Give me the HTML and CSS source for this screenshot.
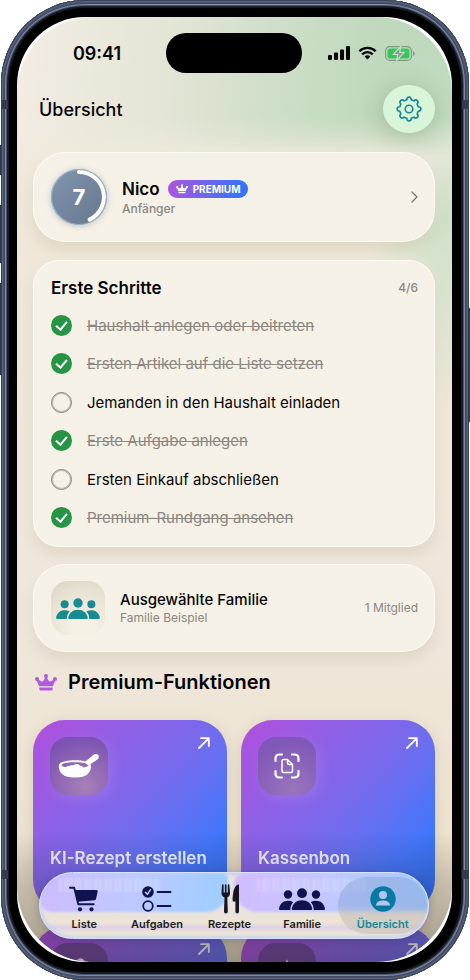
FILE: index.html
```html
<!DOCTYPE html>
<html lang="de">
<head>
<meta charset="utf-8">
<meta name="viewport" content="width=device-width, initial-scale=1">
<title>Übersicht</title>
<link rel="stylesheet" href="styles.css">
</head>
<body>
<svg class="defs" aria-hidden="true">
  <symbol id="crown" viewBox="0 0 22 17">
    <circle cx="11" cy="2" r="2"/><circle cx="2" cy="5" r="2"/><circle cx="20" cy="5" r="2"/>
    <path d="M1.500 6L3 5Q6 8 7.500 7.500Q9.500 6.500 10 2.500H12Q12.500 6.500 14.500 7.500Q16 8 19 5L20.500 6L17.900 12.300H4.100Z"/>
    <path d="M4.300 13.600H17.700V15Q17.700 16.500 16.200 16.500H5.800Q4.300 16.500 4.300 15Z"/>
  </symbol>
  <symbol id="people" viewBox="0 0 46 22">
    <circle cx="9" cy="6.500" r="4.200"/><circle cx="37" cy="6.500" r="4.200"/><circle cx="23" cy="5.200" r="4.900"/>
    <path d="M1 22Q0 22 0 20.500C1 15.500 4.500 12.800 9 12.800Q12 12.800 14.300 14.200C12.200 16.200 11.200 18.800 11.300 22Z"/>
    <path d="M45 22Q46 22 46 20.500C45 15.500 41.500 12.800 37 12.800Q34 12.800 31.700 14.200C33.800 16.200 34.800 18.800 34.700 22Z"/>
    <path d="M14 22Q12.500 22 12.800 20.400C13.800 15.500 17.500 12.200 23 12.200S32.200 15.500 33.200 20.400Q33.500 22 32 22Z"/>
  </symbol>
  <symbol id="arrow" viewBox="0 0 12 12">
    <path d="M1 11L10.700 1.300M3 1.200H10.800V9" fill="none" stroke="currentColor" stroke-width="1.800" stroke-linecap="round" stroke-linejoin="round"/>
  </symbol>
</svg>

<div class="device">
  <i class="band band-tl"></i><i class="band band-tr"></i><i class="band band-bl"></i><i class="band band-br"></i>
  <i class="key key-action"></i><i class="key key-up"></i><i class="key key-down"></i><i class="key key-power"></i>
  <div class="bezel">
    <div class="screen">
      <div class="statusbar">
        <span class="time">09:41</span>
        <span class="island"></span>
        <span class="indicators">
          <svg width="22" height="14" viewBox="0 0 22 14"><rect x="0" y="9" width="4" height="5" rx="1"/><rect x="6" y="6.500" width="4" height="7.500" rx="1"/><rect x="12" y="3.500" width="4" height="10.500" rx="1"/><rect x="18" y="0" width="4" height="14" rx="1"/></svg>
          <svg width="19" height="14" viewBox="0 0 19 14"><path d="M1.300 5.300A11.700 11.700 0 0 1 17.700 5.300M4.200 8.400A7.500 7.500 0 0 1 14.800 8.400" fill="none" stroke="#000" stroke-width="2.300"/><path d="M6.600 10.600A4.200 4.200 0 0 1 12.400 10.600L9.500 13.600Z"/></svg>
          <svg width="30" height="15" viewBox="0 0 30 15"><rect x=".6" y=".6" width="25.800" height="13.800" rx="4.200" fill="none" stroke="#809480" stroke-width="1.100"/><rect x="2.500" y="2.500" width="22" height="10" rx="2.600" fill="#34c759"/><path d="M28 5V10Q29.700 9.200 29.700 7.500T28 5Z" fill="#809480"/><path d="M15.800 .5L8.300 8.500H12.800L11.600 14.500L19.200 6.400H14.700Z" fill="#869a89" stroke="#c6dec6" stroke-width="1.200"/></svg>
        </span>
      </div>

      <header class="topbar">
        <h1>Übersicht</h1>
        <button class="gear" type="button" aria-label="Einstellungen">
          <svg class="line" width="26" height="26" viewBox="-13 -13 26 26" stroke="#188796" stroke-width="1.600" stroke-linejoin="round"><path d="M-2.200 -9.200Q-2.200 -11.900 0 -11.900T2.200 -9.200Q3.600 -8.800 4.900 -8.100Q6.700 -10 8.400 -8.400Q10 -6.700 8.100 -4.900Q8.800 -3.600 9.200 -2.200Q11.900 -2.200 11.900 0T9.200 2.200Q8.800 3.600 8.100 4.900Q10 6.700 8.400 8.400Q6.700 10 4.900 8.100Q3.600 8.800 2.200 9.200Q2.200 11.900 0 11.900T-2.200 9.200Q-3.600 8.800 -4.900 8.100Q-6.700 10 -8.400 8.400Q-10 6.700 -8.100 4.900Q-8.800 3.600 -9.200 2.200Q-11.900 2.200 -11.900 0T-9.200 -2.200Q-8.800 -3.600 -8.100 -4.900Q-10 -6.700 -8.400 -8.400Q-6.700 -10 -4.900 -8.100Q-3.600 -8.800 -2.200 -9.200Z"/><circle r="3.800"/></svg>
        </button>
      </header>

      <main>
        <a class="card profile" href="#profil">
          <span class="level">
            <svg class="line" viewBox="0 0 56 56"><path d="M28 3A25 25 0 0 1 38.600 50.600" stroke="#fff" stroke-width="4" stroke-linecap="round"/></svg>
            <b>7</b>
          </span>
          <span class="who">
            <span class="name">Nico <span class="badge"><svg width="12" height="10"><use href="#crown"/></svg>PREMIUM</span></span>
            <span class="sub medium">Anfänger</span>
          </span>
          <svg class="chevron line" width="7" height="12" viewBox="0 0 7 12"><path d="M1 1L6 6L1 11" stroke="currentColor" stroke-width="1.200" stroke-linecap="round" stroke-linejoin="round"/></svg>
        </a>

        <section class="card steps">
          <div class="steps-head"><h2>Erste Schritte</h2><span class="count">4/6</span></div>
          <ul>
            <li><label><input type="checkbox" checked><span>Haushalt anlegen oder beitreten</span></label></li>
            <li><label><input type="checkbox" checked><span>Ersten Artikel auf die Liste setzen</span></label></li>
            <li><label><input type="checkbox"><span>Jemanden in den Haushalt einladen</span></label></li>
            <li><label><input type="checkbox" checked><span>Erste Aufgabe anlegen</span></label></li>
            <li><label><input type="checkbox"><span>Ersten Einkauf abschließen</span></label></li>
            <li><label><input type="checkbox" checked><span>Premium-Rundgang ansehen</span></label></li>
          </ul>
        </section>

        <a class="card family" href="#familie">
          <span class="family-icon"><svg width="44" height="21"><use href="#people"/></svg></span>
          <span class="who"><span class="family-name">Ausgewählte Familie</span><span class="sub">Familie Beispiel</span></span>
          <span class="sub">1 Mitglied</span>
        </a>

        <h2 class="premium-title"><svg width="22" height="17"><use href="#crown"/></svg>Premium-Funktionen</h2>

        <div class="tiles">
          <a class="tile" href="#ki-rezept">
            <span class="tile-top">
              <span class="tile-icon glow"><svg width="42" height="26" viewBox="0 0 42 26"><path d="M26.500 9.300L35.500 1.700Q38.500 0 40.300 2Q41.800 4.400 39.400 6.500L30.500 12.500Z"/><path fill-rule="evenodd" d="M17 7.300C26.500 7.300 33 9 33 13C33 19.500 29 24.600 17 24.600S.8 19.500 .8 13C.8 9 7.500 7.300 17 7.300ZM17 9.200C9 9.200 3.500 10.300 3.500 12.300Q3.800 13.600 7.500 14.300C9 12.900 10.500 13.400 11.500 12.800C13.300 11.400 14 12.700 15.500 12.200C18 10.500 20.500 10.800 22 12.700C23.500 12.900 24.700 13.100 25.200 14.500Q30.500 13.700 30.500 12.300C30.500 10.300 25 9.200 17 9.200Z"/></svg></span>
              <svg class="arrow" width="12" height="12"><use href="#arrow"/></svg>
            </span>
            <span class="tile-title">KI-Rezept erstellen</span>
          </a>
          <a class="tile" href="#kassenbon">
            <span class="tile-top">
              <span class="tile-icon"><svg class="line" width="26" height="26" viewBox="0 0 26 26" stroke="#fff" stroke-linecap="round" stroke-linejoin="round"><path stroke-width="2.200" d="M1.500 8V5.500Q1.500 1.500 5.500 1.500H8M18 1.500H20.500Q24.500 1.500 24.500 5.500V8M24.500 18V20.500Q24.500 24.500 20.500 24.500H18M8 24.500H5.500Q1.500 24.500 1.500 20.500V18"/><path stroke-width="1.500" d="M9.500 6.500H13.500L18.500 11.500V18Q18.500 19.500 17 19.500H9.500Q8 19.500 8 18V8Q8 6.500 9.500 6.500ZM13.500 6.800V10Q13.500 11.500 15 11.500H18.300"/></svg></span>
              <svg class="arrow" width="12" height="12"><use href="#arrow"/></svg>
            </span>
            <span class="tile-title">Kassenbon</span>
          </a>
          <a class="tile" href="#mehr" aria-label="Weitere Funktion">
            <span class="tile-top">
              <span class="tile-icon dim"><svg width="28" height="28" viewBox="0 0 28 28"><path d="M7 10Q4 1 12 2Q16 -2 20 3Q26 3 24 10V24H7Z"/></svg></span>
              <svg class="arrow" width="12" height="12"><use href="#arrow"/></svg>
            </span>
          </a>
          <a class="tile" href="#mehr-2" aria-label="Weitere Funktion">
            <span class="tile-top">
              <span class="tile-icon dim"><svg width="26" height="26" viewBox="0 0 26 26"><path d="M13 0L16 10L26 13L16 16L13 26L10 16L0 13L10 10Z"/></svg></span>
              <svg class="arrow" width="12" height="12"><use href="#arrow"/></svg>
            </span>
          </a>
        </div>
      </main>

      <div class="shade"></div>

      <nav class="tabbar">
        <i class="refraction refraction-left"></i><i class="refraction refraction-right"></i>
        <i class="ghost ghost-left"></i><i class="ghost ghost-right"></i>
        <a href="#liste"><svg width="30" height="26" viewBox="0 0 30 26"><path d="M1 1.700H5.200L9.300 18.200H24.700" fill="none" stroke="currentColor" stroke-width="1.900" stroke-linecap="round" stroke-linejoin="round"/><path d="M5.500 4H27.500Q29 4 28.700 5.500L27 13Q26.700 14.200 25.400 14.300L8.200 15.800Z"/><circle cx="11" cy="23.300" r="2.100"/><circle cx="22.500" cy="23.300" r="2.100"/></svg>Liste</a>
        <a href="#aufgaben"><svg width="30" height="26" viewBox="0 0 30 26"><circle cx="6" cy="6" r="5.800"/><path d="M3.500 6.300L5.400 8.300L8.500 3.700" fill="none" stroke="#c4cffb" stroke-width="1.400" stroke-linecap="round"/><circle cx="6" cy="20" r="4.800" fill="none" stroke="currentColor" stroke-width="1.800"/><path d="M15.500 6H28.500M15.500 20H28.500" stroke="currentColor" stroke-width="1.900" stroke-linecap="round"/></svg>Aufgaben</a>
        <a class="rezepte" href="#rezepte"><svg width="26" height="30" viewBox="0 0 26 30"><path d="M5 1Q5 .3 5.800 .3T6.600 1V8.500H7.900V1Q8 .3 8.700 .3T9.500 1V8.500H10.800V1Q11 .3 11.700 .3T12.400 1L13 9Q13 12.300 10.300 13.500L10.800 27.500Q10.700 29.600 8.900 29.600T7 27.500L7.500 13.500Q4.500 12.300 4.500 9Z"/><path d="M22 .5V27.500Q22 29.600 20.200 29.600T18.400 27.500V17.500H16.500Q15.500 17.500 15.600 16C15.700 8 17.500 .5 22 .5Z"/></svg>Rezepte</a>
        <a href="#familie-tab"><svg width="46" height="22"><use href="#people"/></svg>Familie</a>
        <a class="active" href="#uebersicht" aria-current="page"><svg width="26" height="26" viewBox="0 0 26 26"><circle cx="13" cy="13" r="12.700" fill="#087aa2"/><circle cx="13" cy="9" r="4" fill="#b3c5f1"/><path d="M5.800 19.500Q6.500 14.500 13 14.500T20.200 19.500H5.800Z" fill="#b3c5f1"/></svg>Übersicht</a>
      </nav>
    </div>
  </div>
</div>
</body>
</html>
```
FILE: styles.css
```css
* { box-sizing: border-box; }

body {
  margin: 0;
  background: #fff;
  color: #050505;
  font-family: Inter, "Liberation Sans", sans-serif;
}

a { color: inherit; text-decoration: none; }
h1, h2, ul { margin: 0; padding: 0; }
svg { display: block; flex: none; fill: currentColor; }
svg.line { fill: none; }
.defs { position: absolute; width: 0; height: 0; }

/* Device shell */
.device {
  position: relative;
  height: 100vh;
  margin: 0 1px;
  padding: 17px 17px 18px 16px;
  border-radius: 84px;
  background: #000;
  box-shadow:
    inset 0 0 0 1px #3a4258,
    inset 0 0 0 2px #5a6480,
    inset 0 0 0 3px #4a5269,
    inset 0 0 0 4px #414960,
    inset 0 0 0 5px #7f8aa6,
    inset 0 0 0 6px #4d566d,
    inset 0 0 1px 8px #1a1d26;
}

.band { position: absolute; width: 6px; height: 9px; background: #343b50; }
.band-tl { left: 1px; top: 100px; }
.band-tr { right: 1px; top: 100px; }
.band-bl { left: 1px; bottom: 101px; }
.band-br { right: 1px; bottom: 101px; }

.key { position: absolute; width: 2px; background: #323a50; }
.key-action { left: -1px; top: 145px; height: 30px; }
.key-up { left: -1px; top: 205px; height: 58px; }
.key-down { left: -1px; top: 283px; height: 92px; }
.key-power { right: -1px; top: 308px; height: 114px; }

.bezel {
  height: 100%;
  border-radius: 68px;
  background: #fff;
  overflow: hidden;
}

.screen {
  position: relative;
  height: 100%;
  overflow: hidden;
  border-radius: 76px;
  padding: 0 17px 0 16px;
  background:
    linear-gradient(180deg, transparent 100px, rgba(241, 234, 221, .7) 140px, transparent 200px),
    radial-gradient(ellipse 90px 240px at 100% 150px, #c5dfc5 0%, rgba(214, 227, 208, 0) 100%),
    linear-gradient(180deg, transparent 120px, #efe7d8 170px, #efe7dc 600px, #ebe1c9 100%),
    linear-gradient(95deg, #f3ece4 0%, #e3e5d5 30%, #c8dcc4 58%, #b6d3b6 85%, #bdd9bd 100%);
}

.statusbar {
  display: grid;
  grid-template-columns: 1fr 136px 1fr;
  align-items: center;
  height: 72px;
}
.time { justify-self: center; font-size: 18px; font-weight: 600; padding-right: 5px; }
.island { height: 40px; border-radius: 20px; background: #000; }
.indicators { display: flex; align-items: center; justify-content: center; gap: 8px; padding-left: 6px; }

.topbar {
  display: flex;
  align-items: center;
  justify-content: space-between;
  height: 40px;
  padding-left: 6px;
}
.topbar h1 { font-size: 18px; font-weight: 500; }
.gear {
  display: grid;
  place-items: center;
  width: 52px;
  height: 48px;
  padding: 0;
  border: 0;
  border-radius: 50%;
  background: #d9f5d9;
  box-shadow: 0 4px 24px rgba(60, 90, 60, .28);
}

/* Cards */
main { display: flex; flex-direction: column; gap: 18px; padding-top: 23px; }

.card {
  border-radius: 32px;
  background: #f6f1e6;
  border: 1px solid rgba(255, 252, 244, .9);
  box-shadow: 0 6px 14px rgba(150, 130, 95, .22), 0 0 14px rgba(255, 255, 255, .4);
}

.profile, .family { display: flex; align-items: center; padding: 0 16px 0 17px; }
.profile { height: 90px; }
.family { height: 88px; }
.who { display: flex; flex: 1; flex-direction: column; }
.sub, .count { color: #8a8781; font-size: 12px; line-height: 16px; }
.medium, .count { font-weight: 500; }

.level {
  display: grid;
  width: 56px;
  height: 56px;
  margin-right: 15px;
  border-radius: 50%;
  background: linear-gradient(135deg, #8295b0, #66778d);
  box-shadow: inset 0 0 0 1px #a2b3cb, 0 1px 6px rgba(90, 120, 170, .4);
  color: #fff;
}
.level > * { grid-area: 1 / 1; place-self: center; }
.level svg { width: 56px; height: 56px; }
.level b { font-size: 22px; line-height: 24px; }

.name { display: flex; align-items: center; gap: 8px; font-size: 17px; font-weight: 600; line-height: 24px; }
.badge {
  display: inline-flex;
  align-items: center;
  gap: 5px;
  height: 18px;
  padding: 0 7px 0 8px;
  border-radius: 9px;
  background: linear-gradient(100deg, #ae55df, #2878ff);
  color: #fff;
  font-size: 10px;
  font-weight: 700;
  line-height: 18px;
}
.chevron { color: #77746f; }

.steps { padding: 17px 16px 9px 17px; border-radius: 26px; }
.steps-head { display: flex; align-items: center; justify-content: space-between; height: 20px; margin-bottom: 8px; }
.steps h2 { font-size: 17px; font-weight: 600; line-height: 20px; }
.steps ul { display: grid; grid-auto-rows: 1fr; height: 231px; list-style: none; }
.steps li { display: grid; align-items: center; }
.steps label { display: flex; align-items: center; gap: 15px; font-size: 15px; }

.steps input {
  appearance: none;
  display: grid;
  place-items: center;
  flex: none;
  width: 21px;
  height: 21px;
  margin: 0;
  border: 1px solid #85827c;
  box-shadow: inset 0 0 0 1px rgba(133, 130, 124, .5);
  border-radius: 50%;
}
.steps input:checked { border: 0; background: #259545; box-shadow: none; }
.steps input:checked::before {
  content: "";
  width: 5px;
  height: 9px;
  margin-bottom: 2px;
  border: solid #fff;
  border-width: 0 2px 2px 0;
  transform: rotate(40deg);
}
.steps input:checked + span { color: #8a8781; text-decoration: line-through; text-decoration-thickness: 1px; }

.family { margin-top: -1px; }
.family-icon {
  display: grid;
  place-items: center;
  width: 54px;
  height: 54px;
  margin-right: 15px;
  border-radius: 17px;
  background: radial-gradient(circle at 60% 85%, #f5f0e4 20%, #e4decf 75%, #d7d0c0 100%);
  color: #168c91;
}
.family-name { font-size: 15px; font-weight: 500; line-height: 20px; }

.premium-title {
  display: flex;
  align-items: center;
  gap: 11px;
  height: 24px;
  padding-left: 2px;
  font-size: 20px;
  font-weight: 600;
  line-height: 24px;
}
.premium-title svg { color: #b05adf; }

/* Feature tiles */
.tiles { display: grid; grid-template-columns: 1fr 1fr; gap: 14px; padding-top: 8px; }
.tile {
  display: flex;
  flex-direction: column;
  height: 192px;
  padding: 17px;
  border-radius: 32px;
  background: linear-gradient(132deg, #b24fdd 0%, #8f60e6 28%, #7a69ec 48%, #6171f3 63%, #4376fa 78%, #2b6bf0 100%);
  box-shadow: 0 4px 14px rgba(150, 130, 95, .25);
  color: #fff;
}
.tile-top { display: flex; align-items: flex-start; justify-content: space-between; }
.tile-icon {
  display: grid;
  place-items: center;
  width: 58px;
  height: 58px;
  border-radius: 18px;
  background: radial-gradient(circle at 60% 90%, #9a75bd, #8058b7 75%);
  box-shadow: 4px 4px 14px rgba(190, 150, 240, .3);
}
.tile-icon.glow { background: radial-gradient(circle at 60% 85%, #a681b8, #7e52b2 80%); }
.tile-icon.dim { background: #7448a4; box-shadow: none; }
.tile-title { margin-top: 51px; font-size: 17px; font-weight: 600; line-height: 24px; opacity: .9; }

.shade {
  position: absolute;
  inset: auto 0 0;
  height: 130px;
  background: linear-gradient(180deg, transparent, rgba(30, 25, 20, .16) 35%, rgba(30, 25, 20, .36));
  pointer-events: none;
}

/* Floating tab bar */
.tabbar {
  position: absolute;
  left: 22px;
  right: 23px;
  bottom: 23px;
  display: grid;
  grid-template-columns: repeat(4, 73fr) 89fr;
  height: 67px;
  padding: 4px 1px 4px 8px;
  overflow: hidden;
  border: 1px solid #d6e2ff;
  border-radius: 34px;
  background: linear-gradient(180deg, #e8e3df 60%, #ece5d4 76%, #ddd0e6 84%, #ece5d6 92%);
  box-shadow: inset 0 0 4px 1px #b9ccff, 0 2px 10px rgba(20, 10, 60, .2);
}
.refraction { position: absolute; top: 0; height: 39px; filter: blur(1px); }
.refraction-left { left: 0; right: 51.500%; border-radius: 0 6px 22px 12px; background: linear-gradient(100deg, #cdbcff, #bec9ff 50%, #9dceff); }
.refraction-right { left: 50%; right: 0; border-radius: 10px 0 0 24px; background: linear-gradient(100deg, #d2bcff, #c1c8ff 50%, #a0cbff); }
.ghost {
  position: absolute;
  top: 5px;
  height: 14px;
  filter: blur(1px);
  background: repeating-linear-gradient(90deg, rgba(255, 255, 255, .2) 0 3px, transparent 3px 5px, rgba(255, 255, 255, .2) 5px 9px, transparent 9px 10px);
}
.ghost-left { left: 5%; width: 26%; }
.ghost-right { left: 56%; width: 28%; }

.tabbar a {
  position: relative;
  display: grid;
  grid-template-rows: 36px 14px;
  place-items: center;
  align-content: center;
  color: #11134f;
  font-size: 11px;
  font-weight: 600;
  line-height: 14px;
  -webkit-text-fill-color: #211d1c;
}
.tabbar .rezepte { color: #17151f; }
.tabbar .active {
  border-radius: 29px;
  background: linear-gradient(180deg, rgba(140, 165, 215, .5) 50%, rgba(205, 198, 190, .75) 68%);
  -webkit-text-fill-color: #168994;
}
```
